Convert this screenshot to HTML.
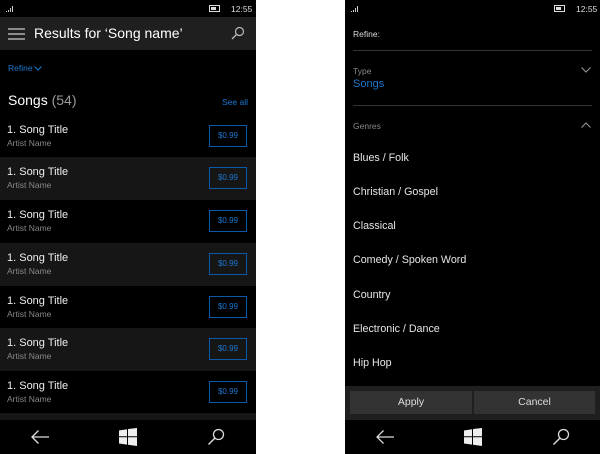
<!DOCTYPE html>
<html><head><meta charset="utf-8"><style>
*{margin:0;padding:0;box-sizing:border-box}
body{width:600px;height:454px;background:#fff;font-family:"Liberation Sans",sans-serif;position:relative;overflow:hidden}
.ph{position:absolute;top:0;width:256px;height:454px;background:#000;color:#fff;overflow:hidden}
.a{position:absolute;white-space:nowrap}
.sig{position:absolute;left:6px;top:6px;width:8px;height:6px}
.row{position:absolute;left:0;width:256px;height:43px}
.row .t{position:absolute;left:7px;top:9px;font-size:11px;color:#eee}
.row .n{position:absolute;left:7px;top:23px;font-size:8.5px;color:#888}
.row .b{position:absolute;left:209px;top:10px;width:38px;height:22px;border:1.5px solid #0a5aa8;color:#1a78d0;font-size:8px;text-align:center;line-height:19px}
.g{position:absolute;left:8px;font-size:10.7px;color:#e6e6e6}
.nav{position:absolute;left:0;top:420px;width:256px;height:34px;background:#000}
</style></head><body>

<div class="ph" style="left:0">
  <svg class="sig" viewBox="0 0 8 6"><rect x="0" y="5" width="1" height="1" fill="#ccc"/><rect x="2" y="4" width="1" height="2" fill="#ccc"/><rect x="4" y="2" width="1" height="4" fill="#ccc"/><rect x="6" y="0" width="1" height="6" fill="#ccc"/></svg>
  <svg class="a" style="left:209px;top:5px" width="12" height="7"><rect x="0.5" y="0.5" width="10" height="6" fill="none" stroke="#ddd"/><rect x="2" y="2" width="5" height="3" fill="#ddd"/></svg>
  <div class="a" style="left:231px;top:4px;font-size:8.5px;color:#ddd">12:55</div>
  <div class="a" style="left:0;top:17px;width:256px;height:33px;background:#1f1f1f"></div>
  <svg class="a" style="left:8px;top:28px" width="18" height="12"><path d="M0 1h17M0 6h17M0 11h17" stroke="#ccc" stroke-width="1.2"/></svg>
  <div class="a" style="left:34px;top:25px;font-size:14px;color:#fff">Results for ‘Song name’</div>
  <svg class="a" style="left:231px;top:26px" width="14" height="14"><circle cx="8.5" cy="5.5" r="4" fill="none" stroke="#bbb" stroke-width="1.2"/><path d="M5.5 8.5L1 13" stroke="#bbb" stroke-width="1.3"/></svg>
  <div class="a" style="left:8px;top:63px;font-size:8.5px;color:#1a78d0">Refine</div>
  <svg class="a" style="left:34px;top:66px" width="8" height="5"><path d="M0.5 0.5l3.5 3.5 3.5-3.5" fill="none" stroke="#1a78d0"/></svg>
  <div class="a" style="left:8px;top:92px;font-size:14px;color:#fff">Songs <span style="color:#999">(54)</span></div>
  <div class="a" style="left:222px;top:97px;font-size:8.5px;color:#1a78d0">See all</div>

  <div class="row" style="top:115px;background:#000"><div class="t">1.&nbsp;Song Title</div><div class="n">Artist Name</div><div class="b">$0.99</div></div>
  <div class="row" style="top:157px;background:#161616"><div class="t">1.&nbsp;Song Title</div><div class="n">Artist Name</div><div class="b">$0.99</div></div>
  <div class="row" style="top:200px;background:#000"><div class="t">1.&nbsp;Song Title</div><div class="n">Artist Name</div><div class="b">$0.99</div></div>
  <div class="row" style="top:243px;background:#161616"><div class="t">1.&nbsp;Song Title</div><div class="n">Artist Name</div><div class="b">$0.99</div></div>
  <div class="row" style="top:286px;background:#000"><div class="t">1.&nbsp;Song Title</div><div class="n">Artist Name</div><div class="b">$0.99</div></div>
  <div class="row" style="top:328px;background:#161616"><div class="t">1.&nbsp;Song Title</div><div class="n">Artist Name</div><div class="b">$0.99</div></div>
  <div class="row" style="top:371px;background:#000"><div class="t">1.&nbsp;Song Title</div><div class="n">Artist Name</div><div class="b">$0.99</div></div>
  <div class="row" style="top:413px;background:#161616"></div>

  <div class="nav">
    <svg class="a" style="left:30px;top:9px" width="20" height="16"><path d="M19 8H2M8.5 1.5L2 8l6.5 6.5" fill="none" stroke="#ddd" stroke-width="1.3"/></svg>
    <svg class="a" style="left:119px;top:8px" width="18" height="18"><path d="M0 2.5L8 1.2V8.3H0Z M9 1L18 0V8.3H9Z M0 9.3H8V16.6L0 15.5Z M9 9.3H18V18L9 16.8Z" fill="#eee"/></svg>
    <svg class="a" style="left:207px;top:8px" width="18" height="18"><circle cx="11.5" cy="6.5" r="5" fill="none" stroke="#ddd" stroke-width="1.3"/><path d="M8 10L1.5 16.5" stroke="#ddd" stroke-width="1.4"/></svg>
  </div>
</div>

<div class="ph" style="left:345px;width:255px">
  <svg class="sig" viewBox="0 0 8 6"><rect x="0" y="5" width="1" height="1" fill="#ccc"/><rect x="2" y="4" width="1" height="2" fill="#ccc"/><rect x="4" y="2" width="1" height="4" fill="#ccc"/><rect x="6" y="0" width="1" height="6" fill="#ccc"/></svg>
  <svg class="a" style="left:209px;top:5px" width="12" height="7"><rect x="0.5" y="0.5" width="10" height="6" fill="none" stroke="#ddd"/><rect x="2" y="2" width="5" height="3" fill="#ddd"/></svg>
  <div class="a" style="left:231px;top:4px;font-size:8.5px;color:#ddd">12:55</div>
  <div class="a" style="left:8px;top:29px;font-size:8.5px;color:#ddd">Refine:</div>
  <div class="a" style="left:8px;top:50px;width:239px;height:1px;background:#333"></div>
  <div class="a" style="left:8px;top:66px;font-size:8.5px;color:#888">Type</div>
  <div class="a" style="left:8px;top:78px;font-size:11px;color:#1a78d0">Songs</div>
  <svg class="a" style="left:236px;top:67px" width="10" height="6"><path d="M0.5 0.5l4.5 4.5 4.5-4.5" fill="none" stroke="#999"/></svg>
  <div class="a" style="left:8px;top:105px;width:239px;height:1px;background:#333"></div>
  <div class="a" style="left:8px;top:121px;font-size:8.5px;color:#888">Genres</div>
  <svg class="a" style="left:236px;top:122px" width="10" height="6"><path d="M0.5 5.5l4.5-4.5 4.5 4.5" fill="none" stroke="#999"/></svg>
  <div class="g" style="top:152px">Blues / Folk</div>
  <div class="g" style="top:186px">Christian / Gospel</div>
  <div class="g" style="top:220px">Classical</div>
  <div class="g" style="top:254px">Comedy / Spoken Word</div>
  <div class="g" style="top:289px">Country</div>
  <div class="g" style="top:323px">Electronic / Dance</div>
  <div class="g" style="top:357px">Hip Hop</div>
  <div class="a" style="left:0;top:386px;width:255px;height:34px;background:#1f1f1f"></div>
  <div class="a" style="left:5px;top:391px;width:122px;height:23px;background:#333;color:#ddd;font-size:10.5px;text-align:center;line-height:23px">Apply</div>
  <div class="a" style="left:129px;top:391px;width:121px;height:23px;background:#333;color:#ddd;font-size:10.5px;text-align:center;line-height:23px">Cancel</div>
  <div class="nav" style="width:255px">
    <svg class="a" style="left:30px;top:9px" width="20" height="16"><path d="M19 8H2M8.5 1.5L2 8l6.5 6.5" fill="none" stroke="#ddd" stroke-width="1.3"/></svg>
    <svg class="a" style="left:119px;top:8px" width="18" height="18"><path d="M0 2.5L8 1.2V8.3H0Z M9 1L18 0V8.3H9Z M0 9.3H8V16.6L0 15.5Z M9 9.3H18V18L9 16.8Z" fill="#eee"/></svg>
    <svg class="a" style="left:207px;top:8px" width="18" height="18"><circle cx="11.5" cy="6.5" r="5" fill="none" stroke="#ddd" stroke-width="1.3"/><path d="M8 10L1.5 16.5" stroke="#ddd" stroke-width="1.4"/></svg>
  </div>
</div>
</body></html>
